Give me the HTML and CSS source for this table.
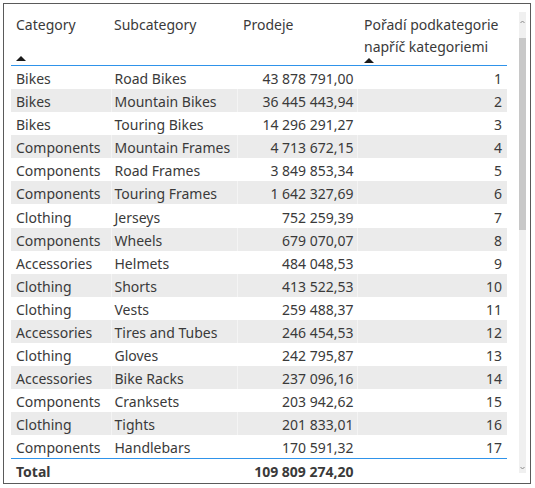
FILE: index.html
```html
<!DOCTYPE html>
<html>
<head>
<meta charset="utf-8">
<link rel="stylesheet" href="styles.css">
</head>
<body>
<div class="visual">
  <div class="table-area">
    <table class="grid">
      <colgroup>
        <col class="c1"><col class="c2"><col class="c3"><col class="c4">
      </colgroup>
      <thead>
        <tr>
          <th><div class="hcell"><span>Category</span><span class="sort"></span></div></th>
          <th><div class="hcell"><span>Subcategory</span></div></th>
          <th><div class="hcell"><span>Prodeje</span></div></th>
          <th><div class="hcell"><span>Pořadí podkategorie napříč kategoriemi</span><span class="sort"></span></div></th>
        </tr>
      </thead>
      <tbody>
        <tr><td>Bikes</td><td>Road Bikes</td><td class="num">43 878 791,00</td><td class="num">1</td></tr>
        <tr><td>Bikes</td><td>Mountain Bikes</td><td class="num">36 445 443,94</td><td class="num">2</td></tr>
        <tr><td>Bikes</td><td>Touring Bikes</td><td class="num">14 296 291,27</td><td class="num">3</td></tr>
        <tr><td>Components</td><td>Mountain Frames</td><td class="num">4 713 672,15</td><td class="num">4</td></tr>
        <tr><td>Components</td><td>Road Frames</td><td class="num">3 849 853,34</td><td class="num">5</td></tr>
        <tr><td>Components</td><td>Touring Frames</td><td class="num">1 642 327,69</td><td class="num">6</td></tr>
        <tr><td>Clothing</td><td>Jerseys</td><td class="num">752 259,39</td><td class="num">7</td></tr>
        <tr><td>Components</td><td>Wheels</td><td class="num">679 070,07</td><td class="num">8</td></tr>
        <tr><td>Accessories</td><td>Helmets</td><td class="num">484 048,53</td><td class="num">9</td></tr>
        <tr><td>Clothing</td><td>Shorts</td><td class="num">413 522,53</td><td class="num">10</td></tr>
        <tr><td>Clothing</td><td>Vests</td><td class="num">259 488,37</td><td class="num">11</td></tr>
        <tr><td>Accessories</td><td>Tires and Tubes</td><td class="num">246 454,53</td><td class="num">12</td></tr>
        <tr><td>Clothing</td><td>Gloves</td><td class="num">242 795,87</td><td class="num">13</td></tr>
        <tr><td>Accessories</td><td>Bike Racks</td><td class="num">237 096,16</td><td class="num">14</td></tr>
        <tr><td>Components</td><td>Cranksets</td><td class="num">203 942,62</td><td class="num">15</td></tr>
        <tr><td>Clothing</td><td>Tights</td><td class="num">201 833,01</td><td class="num">16</td></tr>
        <tr><td>Components</td><td>Handlebars</td><td class="num">170 591,32</td><td class="num">17</td></tr>
      </tbody>
      <tfoot>
        <tr><td>Total</td><td></td><td class="num">109 809 274,20</td><td></td></tr>
      </tfoot>
    </table>
  </div>
  <div class="scroll">
    <svg class="arrow" width="7" height="10" viewBox="0 0 7 10"><polyline points="1.5,6 3.5,4 5.5,6" fill="none" stroke="#8a8a8a" stroke-width="1"/></svg>
    <div class="track"><div class="thumb"></div></div>
    <svg class="arrow" width="7" height="10" viewBox="0 0 7 10"><polyline points="1.5,4 3.5,6 5.5,4" fill="none" stroke="#8a8a8a" stroke-width="1"/></svg>
  </div>
</div>
</body>
</html>
```
FILE: styles.css
```css
html, body {
  margin: 0;
  padding: 0;
  background: #ffffff;
}
body {
  font-family: "Noto Sans", "Open Sans", sans-serif;
  font-size: 14px;
  color: #3a3a3a;
}
.visual {
  margin: 3px 0 0 3px;
  width: 526px;
  height: 479px;
  border: 1px solid #5a5a5a;
  display: flex;
  background: #ffffff;
}
.table-area {
  padding-left: 7px;
  width: 496px;
}
.grid {
  border-collapse: collapse;
  table-layout: fixed;
  width: 496px;
}
.c1 { width: 100px; }
.c2 { width: 126px; }
.c3 { width: 120px; }
.c4 { width: 150px; }
.grid th {
  padding: 0;
  font-weight: normal;
  text-align: left;
  vertical-align: top;
  border-bottom: 1px solid #2f93ea;
}
.hcell {
  height: 61px;
  box-sizing: border-box;
  padding: 10px 5px 4px 5px;
  display: flex;
  flex-direction: column;
  line-height: 22px;
}
.grid th:nth-child(2) .hcell { padding-left: 3px; }
.grid th:nth-child(3) .hcell { padding-left: 6px; }
.grid th:nth-child(4) .hcell { padding-left: 7px; }
.sort {
  margin-top: auto;
  width: 0;
  height: 0;
  border-left: 5px solid transparent;
  border-right: 5px solid transparent;
  border-bottom: 5px solid #1a1a1a;
}
.grid td {
  height: 23px;
  padding: 2px 5px 0 5px;
  line-height: 21px;
  white-space: nowrap;
  overflow: hidden;
  border-left: 1px solid transparent;
  box-sizing: border-box;
}
.grid td:first-child { border-left: none; }
.grid td:nth-child(2) { padding-left: 3px; }
.grid td:nth-child(3) { padding-right: 3px; }
.grid td:nth-child(4) { padding-right: 5px; }
.grid tbody tr { height: 23.1px; }
.grid tbody tr:nth-child(even) td {
  background: #ebebeb;
  border-left-color: #f4f4f4;
}
.grid tbody tr:nth-child(even) td:first-child { border-left: none; }
.grid .num { text-align: right; }
.grid tbody tr:last-child td { border-bottom: 1px solid #2f93ea; }
.grid tfoot td {
  font-weight: bold;
  height: 23px;
  padding-top: 2px;
}
.scroll {
  margin-left: 12px;
  margin-top: 8px;
  width: 7px;
  height: 461px;
  background: #f0f0f0;
  display: flex;
  flex-direction: column;
}
.arrow {
  display: block;
  flex: none;
  margin-top: 5px;
}
.track {
  flex: 1;
}
.thumb {
  margin-top: 11px;
  height: 192px;
  background: #c8c8c8;
}
```
